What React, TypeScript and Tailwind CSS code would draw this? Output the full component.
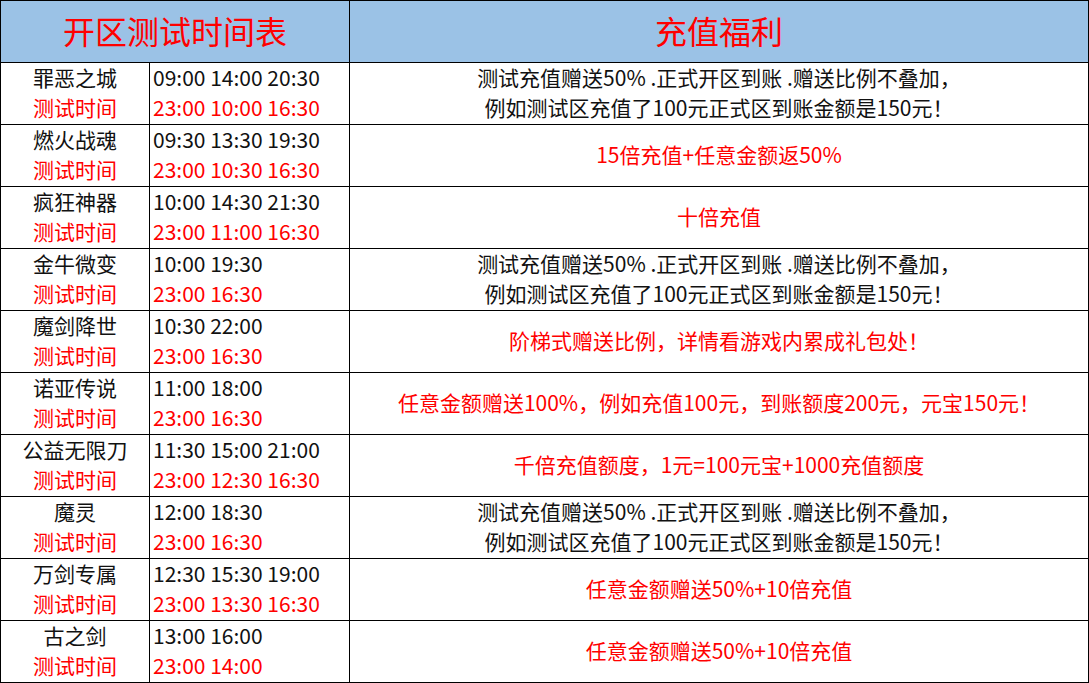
const rows = [
  { name: "罪恶之城", open: "09:00 14:00 20:30", test: "23:00 10:00 16:30", bonus: ["测试充值赠送50% .正式开区到账 .赠送比例不叠加，", "例如测试区充值了100元正式区到账金额是150元！"], red: false },
  { name: "燃火战魂", open: "09:30 13:30 19:30", test: "23:00 10:30 16:30", bonus: ["15倍充值+任意金额返50%"], red: true },
  { name: "疯狂神器", open: "10:00 14:30 21:30", test: "23:00 11:00 16:30", bonus: ["十倍充值"], red: true },
  { name: "金牛微变", open: "10:00 19:30", test: "23:00 16:30", bonus: ["测试充值赠送50% .正式开区到账 .赠送比例不叠加，", "例如测试区充值了100元正式区到账金额是150元！"], red: false },
  { name: "魔剑降世", open: "10:30 22:00", test: "23:00 16:30", bonus: ["阶梯式赠送比例，详情看游戏内累成礼包处！"], red: true },
  { name: "诺亚传说", open: "11:00 18:00", test: "23:00 16:30", bonus: ["任意金额赠送100%，例如充值100元，到账额度200元，元宝150元！"], red: true },
  { name: "公益无限刀", open: "11:30 15:00 21:00", test: "23:00 12:30 16:30", bonus: ["千倍充值额度，1元=100元宝+1000充值额度"], red: true },
  { name: "魔灵", open: "12:00 18:30", test: "23:00 16:30", bonus: ["测试充值赠送50% .正式开区到账 .赠送比例不叠加，", "例如测试区充值了100元正式区到账金额是150元！"], red: false },
  { name: "万剑专属", open: "12:30 15:30 19:00", test: "23:00 13:30 16:30", bonus: ["任意金额赠送50%+10倍充值"], red: true },
  { name: "古之剑", open: "13:00 16:00", test: "23:00 14:00", bonus: ["任意金额赠送50%+10倍充值"], red: true },
];

export default function App() {
  return (
    <div
      className="w-[1089px] bg-white border-t border-l border-black text-[21px] leading-[30px] text-[#111]"
      style={{ fontFamily: '"Noto Sans CJK SC", "Noto Sans", sans-serif' }}
    >
      <div className="grid grid-cols-[149px_200px_739px]">
        <div className="col-span-2 h-[62px] pb-1 flex items-center justify-center bg-[#9bc2e6] border-r border-b border-black text-[32px] text-[#ff0000]">
          开区测试时间表
        </div>
        <div className="h-[62px] pb-1 flex items-center justify-center bg-[#9bc2e6] border-r border-b border-black text-[32px] text-[#ff0000]">
          充值福利
        </div>
        {rows.map((r) => (
          <Row key={r.name} r={r} />
        ))}
      </div>
    </div>
  );
}

function Row({ r }: { r: (typeof rows)[number] }) {
  return (
    <>
      <div className="h-[62px] pb-1 flex flex-col justify-center items-center border-r border-b border-black">
        <span>{r.name}</span>
        <span className="text-[#ff0000]">测试时间</span>
      </div>
      <div className="h-[62px] pb-1 flex flex-col justify-center pl-[3px] border-r border-b border-black">
        <span>{r.open}</span>
        <span className="text-[#ff0000]">{r.test}</span>
      </div>
      <div
        className={
          "h-[62px] pb-1 flex flex-col justify-center items-center border-r border-b border-black " +
          (r.red ? "text-[#ff0000]" : "")
        }
      >
        {r.bonus.map((b) => (
          <span key={b}>{b}</span>
        ))}
      </div>
    </>
  );
}
